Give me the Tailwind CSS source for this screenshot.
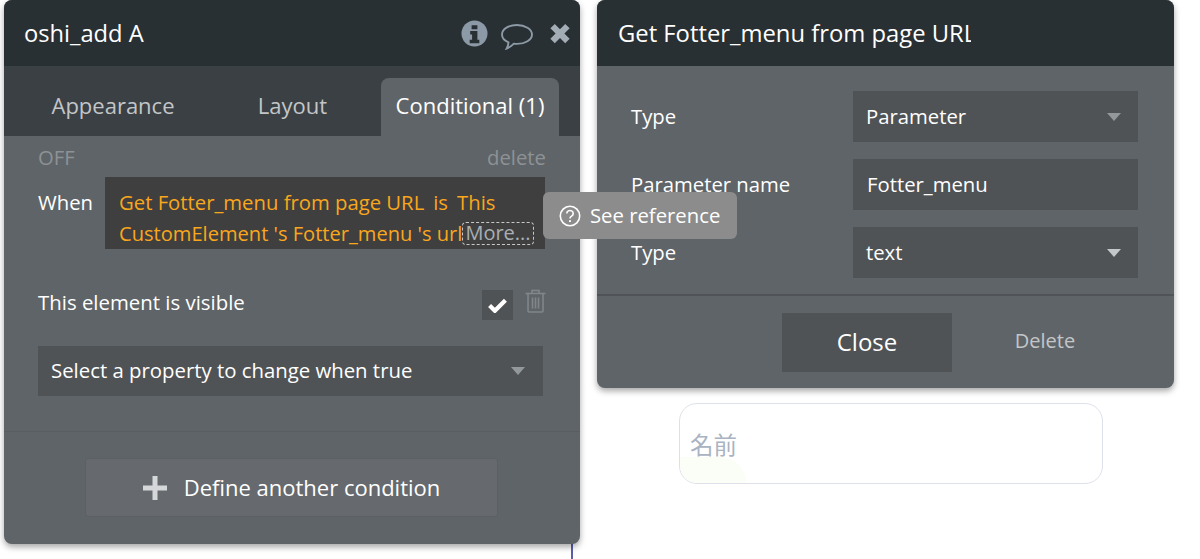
<!DOCTYPE html>
<html lang="en">
<head>
  <meta charset="UTF-8" />
  <title>oshi_add A</title>
  <script src="https://cdn.jsdelivr.net/npm/@tailwindcss/browser@4"></script>
</head>
<body class="bg-white font-['Open_Sans','Noto_Sans_CJK_JP',sans-serif] overflow-hidden">
  <div class="relative w-[1200px] h-[559px] overflow-hidden">
    <!-- canvas line under the left window -->
    <div class="absolute left-[571px] top-[540px] w-[2px] h-[19px] bg-[#5a5fa8]"></div>

    <!-- input on the canvas -->
    <div class="absolute left-[679px] top-[403px] w-[424px] h-[81px] rounded-[18px] border border-[#dfe1ea] bg-white overflow-hidden flex items-center pl-[10px] pt-[5px]">
      <div class="absolute left-0 bottom-0 w-[66px] h-[26px] rounded-tr-[50px] bg-[#fbfdf7]"></div>
      <span class="relative text-[23.5px] text-[#a9b3c1]">名前</span>
    </div>

    <!-- left window -->
    <div class="absolute left-[4px] top-0 w-[576px] h-[544px] rounded-[8px] bg-[#5f6468] shadow-[0_3px_6px_rgba(0,0,0,0.35)] flex flex-col overflow-hidden">
      <div class="h-[66px] shrink-0 bg-[#293033] flex items-center justify-between pl-[20px] pr-[9px]">
        <span class="pt-[2px] text-[23.7px] text-white">oshi_add A</span>
        <div class="flex items-center">
          <svg class="w-[27px] h-[27px]" viewBox="0 0 28 28">
            <circle cx="14" cy="14" r="13.5" fill="#8c99a6"/>
            <path d="M11 5.5h6v4h-6z M9.5 11.5h7.5v9h2v3.5h-10v-3.5h2.5v-5.500h-2z" fill="#293033"/>
          </svg>
          <svg class="w-[32px] h-[26px] ml-[13px] mt-[7px]" viewBox="0 0 32 26">
            <path d="M16 1C8 1 1 4.800 1 10.500c0 3.400 2.600 6.200 6.500 7.800-.2 2.300-.8 4.400-1.800 6.200 3-1 5.400-3 7.200-4.800.9.100 2.100.200 3.100.200 8 0 15-4 15-9.400S24 1 16 1z" fill="none" stroke="#8c99a6" stroke-width="1.900"/>
          </svg>
          <svg class="w-[22px] h-[21px] ml-[16px]" viewBox="0 0 24 24">
            <path d="M6 1l6 6 6-6 5 5-6 6 6 6-5 5-6-6-6 6-5-5 6-6-6-6z" fill="#a3adb6"/>
          </svg>
        </div>
      </div>

      <div class="h-[70px] shrink-0 bg-[#3b4044] flex items-end text-[22px] leading-[55px]">
        <div class="w-[218px] h-[58px] text-center text-[#c3c6c8]">Appearance</div>
        <div class="w-[141px] h-[58px] mr-[18px] text-center text-[#c3c6c8]">Layout</div>
        <div class="w-[178px] h-[58px] text-center text-white bg-[#5f6468] rounded-t-[8px]">Conditional (1)</div>
      </div>

      <div class="flex-1 flex flex-col">
        <div class="flex justify-between items-center pl-[34px] pr-[34px] h-[41px] pt-[1px] text-[20.300px] text-[#8d9295]">
          <span>OFF</span>
          <span>delete</span>
        </div>
        <div class="flex pl-[34px]">
          <span class="w-[67px] pt-[11px] text-[20.300px] leading-[28px] text-white">When</span>
          <div class="relative w-[440px] h-[72px] bg-[#403f3f] pl-[14px] pt-[10px] text-[20.300px] leading-[31px] text-[#f9a71c] overflow-hidden">
            <div class="whitespace-nowrap">Get Fotter_menu from page URL<span class="ml-[9px]">is</span><span class="ml-[9px]">This</span></div>
            <div class="whitespace-nowrap text-[20.100px]">CustomElement 's Fotter_menu 's url</div>
            <span class="absolute left-[357px] top-[45px] w-[72px] h-[23px] rounded-[4px] border border-dashed border-[#c8c8c8] bg-[#403f3f] text-center text-[20px] leading-[20px] text-[#a9afb4]">More...</span>
          </div>
        </div>
        <div class="flex items-start mt-[41px] pl-[34px] h-[56px]">
          <span class="w-[444px] -mt-[1px] text-[20.400px] leading-[26px] text-white">This element is visible</span>
          <div class="w-[31px] h-[30px] bg-[#505356] flex items-center justify-center">
            <svg class="w-[19px] h-[16px]" viewBox="0 0 18 15"><path d="M1.500 8l5 5L16.500 3" fill="none" stroke="#fff" stroke-width="4"/></svg>
          </div>
          <svg class="w-[21px] h-[24px] ml-[12px] -mt-[1px]" viewBox="0 0 21 24" fill="none" stroke="#80868a" stroke-width="1.600">
            <path d="M0.500 4.500h20M7 4.500V1.500h7v3M3 4.500v17.500a1 1 0 0 0 1 1h13a1 1 0 0 0 1-1V4.500M7.500 8.500v11M10.500 8.500v11M13.500 8.500v11"/>
          </svg>
        </div>
        <div class="ml-[34px] w-[505px] h-[50px] bg-[#505356] flex items-center justify-between pl-[13px] pr-[18px] text-[20.350px] text-white">
          <span class="-mt-[1px]">Select a property to change when true</span>
          <span class="w-0 h-0 border-l-[7px] border-r-[7px] border-t-[8px] border-l-transparent border-r-transparent border-t-[#93989b]"></span>
        </div>
        <div class="mt-[35px] h-[1px] bg-[#5a5e62]"></div>
        <div class="mt-[26px] ml-[81px] w-[413px] h-[59px] bg-[#666a6e] border border-[#5c6064] rounded-[3px] flex items-center justify-center text-[22px] text-white">
          <svg class="w-[24px] h-[24px] mr-[17px]" viewBox="0 0 24 24"><path d="M9.500 0h5v9.500h9.500v5h-9.500v9.500h-5v-9.500H0v-5h9.500z" fill="#d6d7d8"/></svg>
          <span>Define another condition</span>
        </div>
      </div>
    </div>

    <!-- right window -->
    <div class="absolute left-[597px] top-0 w-[577px] h-[388px] rounded-[8px] bg-[#5f6468] shadow-[0_3px_6px_rgba(0,0,0,0.35)] flex flex-col overflow-hidden">
      <div class="h-[66px] shrink-0 bg-[#293033] flex items-center pl-[21px] pt-[2px] text-[23.800px] text-white">
        <span class="w-[353px] overflow-hidden whitespace-nowrap">Get Fotter_menu from page URL</span>
      </div>
      <div class="flex flex-col gap-[17px] pt-[25px] pl-[34px]">
        <div class="flex items-center h-[51px]">
          <span class="w-[222px] text-[20.300px] text-white">Type</span>
          <div class="w-[285px] h-[51px] bg-[#505356] flex items-center justify-between pl-[13px] pr-[17px] text-[20.300px] text-white">
            <span>Parameter</span>
            <span class="w-0 h-0 border-l-[7px] border-r-[7px] border-t-[8px] border-l-transparent border-r-transparent border-t-[#93989b]"></span>
          </div>
        </div>
        <div class="flex items-center h-[51px]">
          <span class="w-[222px] text-[20.300px] text-white">Parameter name</span>
          <div class="w-[285px] h-[51px] bg-[#505356] flex items-center pl-[14px] text-[20.300px] text-white">Fotter_menu</div>
        </div>
        <div class="flex items-center h-[51px]">
          <span class="w-[222px] text-[20.300px] text-white">Type</span>
          <div class="w-[285px] h-[51px] bg-[#505356] flex items-center justify-between pl-[13px] pr-[17px] text-[20.300px] text-white">
            <span>text</span>
            <span class="w-0 h-0 border-l-[7px] border-r-[7px] border-t-[8px] border-l-transparent border-r-transparent border-t-[#c4c8cb]"></span>
          </div>
        </div>
      </div>
      <div class="mt-[16px] h-[2px] bg-[#505458]"></div>
      <div class="flex items-start mt-[17px] pl-[185px]">
        <div class="w-[170px] h-[59px] pb-[2px] bg-[#505356] flex items-center justify-center text-[24px] text-white">Close</div>
        <div class="w-[186px] h-[57px] pb-[2px] flex items-center justify-center text-[20px] text-[#c3c6c8]">Delete</div>
      </div>
    </div>

    <!-- tooltip -->
    <div class="absolute left-[543px] top-[192px] w-[194px] h-[47px] rounded-[6px] bg-[#8c8c8c] flex items-center pl-[16px] text-[20.300px] text-white">
      <svg class="w-[22px] h-[22px] mr-[9px]" viewBox="0 0 22 22" fill="none" stroke="#fff" stroke-width="1.600">
        <circle cx="11" cy="11" r="9.700"/>
        <path d="M7.800 8.500a3.200 3 0 1 1 4.800 2.600c-1 .6-1.600 1.200-1.600 2.400"/>
        <path d="M11 15.200v1.800" stroke-width="2"/>
      </svg>
      <span>See reference</span>
    </div>
  </div>
</body>
</html>
